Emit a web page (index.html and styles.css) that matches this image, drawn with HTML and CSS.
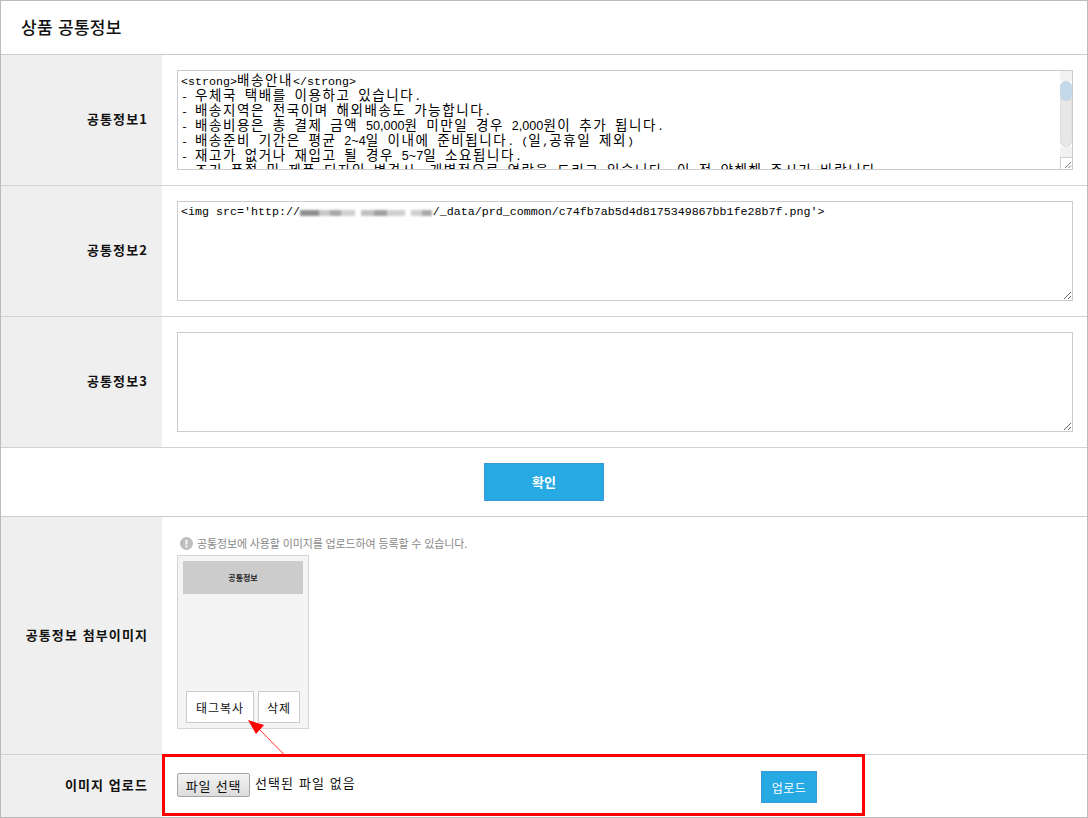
FILE: index.html
```html
<!DOCTYPE html>
<html lang="ko">
<head>
<meta charset="utf-8">
<title>상품 공통정보</title>
<link rel="stylesheet" href="styles.css">
</head>
<body>
<main class="panel">
  <h1 class="title">상품 공통정보</h1>
  <div class="row">
    <div class="label">공통정보1</div>
    <div class="cell">
      <div class="area-wrap">
        <div class="area area-rich" role="textbox" aria-multiline="true">
          <div><span class="m">&lt;strong&gt;</span>배송안내<span class="m">&lt;/strong&gt;</span></div>
          <div><span class="m">- </span>우체국 택배를 이용하고 있습니다<span class="m">.</span></div>
          <div><span class="m">- </span>배송지역은 전국이며 해외배송도 가능합니다<span class="m">.</span></div>
          <div><span class="m">- </span>배송비용은 총 결제 금액 <span class="d">50,000</span>원 미만일 경우 <span class="d">2,000</span>원이 추가 됩니다<span class="m">.</span></div>
          <div><span class="m">- </span>배송준비 기간은 평균 <span class="d">2~4</span>일 이내에 준비됩니다<span class="m">. (</span>일<span class="m">,</span>공휴일 제외<span class="m">)</span></div>
          <div><span class="m">- </span>재고가 없거나 재입고 될 경우 <span class="d">5~7</span>일 소요됩니다<span class="m">.</span></div>
          <div><span class="m">- </span>조기 품절 및 제품 디자인 변경시<span class="m">, </span>개별적으로 연락을 드리고 있습니다<span class="m">. </span>이 점 양해해 주시기 바랍니다<span class="m">.</span></div>
        </div>
        <div class="scrollbar" aria-hidden="true">
          <div class="sb-button"></div>
          <div class="sb-track"><div class="sb-thumb"></div></div>
          <div class="sb-button"></div>
          <div class="sb-corner"><svg width="8" height="8" viewBox="0 0 8 8"><path d="M1 7 7 1M4.500 7 7 4.500" stroke="#777" stroke-width="1" fill="none"/></svg></div>
        </div>
      </div>
    </div>
  </div>
  <div class="row">
    <div class="label">공통정보2</div>
    <div class="cell">
      <div class="area-wrap">
        <textarea class="area area-url" spellcheck="false"><img src='http://                   /_data/prd_common/c74fb7ab5d4d8175349867bb1fe28b7f.png'></textarea>
        <div class="blur" aria-hidden="true"><i class="blur-a"></i><i class="blur-b"></i><i class="blur-c"></i></div>
      </div>
    </div>
  </div>
  <div class="row">
    <div class="label">공통정보3</div>
    <div class="cell">
      <textarea class="area area-url" spellcheck="false"></textarea>
    </div>
  </div>
  <div class="confirm-row">
    <button class="btn btn-confirm" type="button">확인</button>
  </div>
  <div class="row row-images">
    <div class="label">공통정보 첨부이미지</div>
    <div class="cell cell-images">
      <p class="hint">
        <svg class="hint-icon" viewBox="0 0 14 14" width="13" height="13" aria-hidden="true"><circle cx="7" cy="7" r="7" fill="#bdbdbd"/><rect x="6" y="3" width="2" height="5.200" fill="#fff"/><rect x="6" y="9.200" width="2" height="2" fill="#fff"/></svg>
        <span>공통정보에 사용할 이미지를 업로드하여 등록할 수 있습니다.</span>
      </p>
      <div class="card">
        <div class="thumb">공통정보</div>
        <div class="card-actions">
          <button class="btn-tag btn-copy" type="button">태그복사</button>
          <button class="btn-tag btn-del" type="button">삭제</button>
        </div>
      </div>
    </div>
  </div>
  <div class="row row-upload">
    <div class="label">이미지 업로드</div>
    <div class="cell cell-upload">
      <button class="file-btn" type="button">파일 선택</button>
      <span class="file-name">선택된 파일 없음</span>
      <button class="btn btn-upload" type="button">업로드</button>
    </div>
    <div class="highlight"></div>
    <svg class="arrow" width="50" height="36" viewBox="0 0 50 36" aria-hidden="true"><line x1="43" y1="34.500" x2="18" y2="9" stroke="#f33" stroke-width="1"/><polygon points="7,0 23,5 15,14" fill="#f00"/></svg>
  </div>
</main>
</body>
</html>
```
FILE: styles.css
```css
* { box-sizing: border-box; }
html, body { margin: 0; padding: 0; background: #fff; }
body { font-family: "Noto Sans CJK KR", "Liberation Sans", sans-serif; color: #000; }

.panel {
  width: 1088px;
  height: 818px;
  border: 1px solid #bbb;
  display: flex;
  flex-direction: column;
  overflow: hidden;
}

.title {
  margin: 0;
  height: 54px;
  flex: none;
  padding: 0 0 3px 20px;
  display: flex;
  align-items: center;
  font-size: 17px;
  font-weight: 500;
  letter-spacing: 0.3px;
  color: #111;
  border-bottom: 1px solid #ccc;
}

.row {
  display: flex;
  flex: none;
  height: 131px;
  border-bottom: 1px solid #d2d2d2;
  position: relative;
}

.label {
  width: 161px;
  flex: none;
  background: #efefef;
  display: flex;
  align-items: center;
  justify-content: flex-end;
  padding: 0 14px 3px 0;
  font-size: 13px;
  font-weight: 700;
  letter-spacing: 1.1px;
  color: #111;
}

.cell { flex: 1; padding: 15px 14px 15px 15px; min-width: 0; }

.area-wrap { position: relative; height: 100px; }

.area {
  display: block;
  width: 896px;
  height: 100px;
  margin: 0;
  padding: 3px 3px 2px;
  border: 1px solid #ccc;
  border-radius: 0;
  outline: 0;
  background: #fff;
  color: #000;
  line-height: 15px;
}

.area-url {
  font-family: "Liberation Mono", monospace;
  font-size: 11.67px;
  resize: both;
}

.area-rich {
  overflow: hidden;
  white-space: nowrap;
  padding-top: 1px;
  font-family: "Noto Sans CJK KR", sans-serif;
  font-size: 13.5px;
  letter-spacing: 1.58px;
  word-spacing: 2.4px;
}
.area-rich div { height: 15px; line-height: 15px; }
.m {
  font-family: "Liberation Mono", monospace;
  font-size: 11.67px;
  letter-spacing: 0;
  word-spacing: 0;
}
.d {
  font-family: "Liberation Sans", sans-serif;
  font-size: 12.6px;
  letter-spacing: 0;
  word-spacing: 0;
}

.scrollbar {
  position: absolute;
  right: 1px;
  top: 1px;
  width: 12px;
  height: 98px;
  display: flex;
  flex-direction: column;
}
.sb-button { height: 10px; flex: none; background: #f1f1f1; }
.sb-track {
  flex: 1;
  background: #e8e8e8;
  border-radius: 6px;
  box-shadow: inset 0 0 2px #ccc;
}
.sb-thumb { height: 20px; background: #c3d9ea; border-radius: 6px; }
.sb-corner {
  height: 12px;
  flex: none;
  background: #fff;
  border-left: 1px solid #ccc;
  border-top: 1px solid #ccc;
  display: flex;
  align-items: flex-end;
  justify-content: flex-end;
}
.sb-corner svg { display: block; }

.blur {
  position: absolute;
  left: 123px;
  top: 6px;
  display: flex;
  height: 12px;
  align-items: center;
  filter: blur(1.2px);
}
.blur i { display: block; height: 6px; }
.blur-a { width: 55px; background: linear-gradient(90deg, #8f8f8f 0 35%, #c8c8c8 35% 55%, #a8a8a8 55% 75%, #d0d0d0 75%); }
.blur-b { width: 44px; margin-left: 6px; background: linear-gradient(90deg, #c0c0c0 0 30%, #a0a0a0 30% 60%, #cfcfcf 60%); }
.blur-c { width: 21px; margin-left: 6px; background: linear-gradient(90deg, #cfcfcf 0 50%, #a8a8a8 50%); }

.confirm-row {
  flex: none;
  height: 69px;
  border-bottom: 1px solid #ccc;
  display: flex;
  align-items: center;
  justify-content: center;
  padding-bottom: 1px;
}

.btn {
  border: 1px solid #3a98d4;
  background: #27aae3;
  color: #fff;
  font-family: inherit;
  padding: 0;
  cursor: pointer;
}
.btn-confirm { width: 120px; height: 38px; font-size: 13px; font-weight: 700; }

.row-images { height: 238px; }
.cell-images { padding: 19px 0 0 15px; }

.hint {
  margin: 0 0 5px 3px;
  display: flex;
  align-items: center;
  gap: 4px;
  height: 14px;
  font-size: 11px;
  letter-spacing: -0.14px;
  color: #888;
}
.hint-icon { flex: none; }

.card {
  width: 132px;
  height: 174px;
  background: #f4f4f4;
  border: 1px solid #d5d5d5;
  padding: 5px;
  display: flex;
  flex-direction: column;
  justify-content: space-between;
}
.thumb {
  width: 120px;
  height: 33px;
  background: #ccc;
  display: flex;
  align-items: center;
  justify-content: center;
  padding-bottom: 1px;
  font-size: 8px;
  font-weight: 700;
  color: #222;
}
.card-actions { display: flex; gap: 4px; padding-left: 3px; }
.btn-tag {
  height: 32px;
  padding: 0;
  background: #fff;
  border: 1px solid #ccc;
  font-family: inherit;
  font-size: 12px;
  letter-spacing: 1px;
  color: #111;
}
.btn-copy { width: 68px; }
.btn-del { width: 42px; }

.row-upload { height: 62px; border-bottom: 0; }
.cell-upload {
  padding: 18px 0 0 15px;
  display: flex;
  align-items: flex-start;
}
.file-btn {
  width: 73px;
  height: 24px;
  padding: 0;
  background: linear-gradient(#f3f3f3, #dcdcdc);
  border: 1px solid #a5a5a5;
  border-radius: 2px;
  font-family: inherit;
  font-size: 13px;
  letter-spacing: 0.8px;
  color: #111;
}
.file-name {
  margin-left: 5px;
  width: 506px;
  font-size: 13px;
  letter-spacing: 1.1px;
  line-height: 20px;
  color: #111;
}
.btn-upload { width: 56px; height: 32px; font-size: 12px; letter-spacing: 0.5px; margin-top: -2px; }

.highlight {
  position: absolute;
  left: 161px;
  top: -1px;
  width: 703px;
  height: 62px;
  border: 3px solid #f00;
  pointer-events: none;
}
.arrow {
  position: absolute;
  left: 240px;
  top: -35px;
  pointer-events: none;
}
```
